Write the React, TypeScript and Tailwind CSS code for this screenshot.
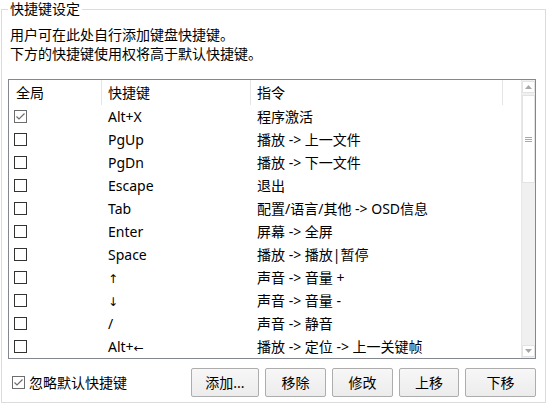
import React from 'react';

const rows = [
  { checked: true, key: 'Alt+X', cmd: '程序激活' },
  { checked: false, key: 'PgUp', cmd: '播放 -> 上一文件' },
  { checked: false, key: 'PgDn', cmd: '播放 -> 下一文件' },
  { checked: false, key: 'Escape', cmd: '退出' },
  { checked: false, key: 'Tab', cmd: '配置/语言/其他 -> OSD信息' },
  { checked: false, key: 'Enter', cmd: '屏幕 -> 全屏' },
  { checked: false, key: 'Space', cmd: '播放 -> 播放|暂停' },
  { checked: false, key: '↑', cmd: '声音 -> 音量 +' },
  { checked: false, key: '↓', cmd: '声音 -> 音量 -' },
  { checked: false, key: '/', cmd: '声音 -> 静音' },
  { checked: false, key: 'Alt+←', cmd: '播放 -> 定位 -> 上一关键帧' },
];

const buttons = [
  { label: '添加...', w: 'w-[68px]' },
  { label: '移除', w: 'w-[61px]' },
  { label: '修改', w: 'w-[61px]' },
  { label: '上移', w: 'w-[60px]' },
  { label: '下移', w: 'w-[71px]' },
];

function KeyLabel({ text }: { text: string }) {
  const parts = text.split(/([↑↓←])/);
  return (
    <>
      {parts.map((p, i) =>
        /[↑↓←]/.test(p) ? (
          <span key={i} className="text-[12px]" style={{ fontFamily: '"DejaVu Sans", sans-serif' }}>
            {p}
          </span>
        ) : (
          <span key={i}>{p}</span>
        )
      )}
    </>
  );
}

function CheckBox({ checked }: { checked: boolean }) {
  return (
    <svg width="13" height="13" viewBox="0 0 13 13" className="shrink-0">
      <rect x="0.5" y="0.5" width="12" height="12" fill="#fff" stroke={checked ? '#6d6d6d' : '#333'} />
      {checked && <polyline points="2.5,6.5 5,9 10.5,3.5" fill="none" stroke="#6d6d6d" strokeWidth="1.2" />}
    </svg>
  );
}

function ScrollBar() {
  return (
    <div className="w-[14px] flex flex-col bg-[#f0f0f0] border-l border-[#e8e8e8]">
      <div className="h-[12px] mt-[1px] bg-white border border-[#e3e3e3] flex items-center justify-center">
        <svg width="7" height="4" viewBox="0 0 7 4">
          <polygon points="0,4 3.5,0 7,4" fill="#a8a8a8" />
        </svg>
      </div>
      <div className="h-[88px] mt-[2px] bg-white border border-[#e3e3e3] flex flex-col items-center justify-center gap-[1px]">
        <div className="w-[7px] h-[1px] bg-[#a8a8a8]" />
        <div className="w-[7px] h-[1px] bg-[#a8a8a8]" />
        <div className="w-[7px] h-[1px] bg-[#a8a8a8]" />
      </div>
      <div className="flex-1" />
      <div className="h-[12px] mb-[1px] bg-white border border-[#e3e3e3] flex items-center justify-center">
        <svg width="7" height="4" viewBox="0 0 7 4">
          <polygon points="0,0 3.5,4 7,0" fill="#a8a8a8" />
        </svg>
      </div>
    </div>
  );
}

export default function App() {
  return (
    <div
      className="w-[546px] h-[406px] bg-white pt-[9px] pl-[1px] text-[14px] text-black"
      style={{ fontFamily: '"Noto Sans", "Noto Sans CJK SC", sans-serif' }}
    >
      <div className="relative w-[545px] h-[394px] border border-[#dcdcdc] flex flex-col pl-[6px] pt-[15px] pb-[5px]">
        <span className="absolute left-[6px] top-[-11px] px-[2px] bg-white leading-[19px]">快捷键设定</span>

        <div className="ml-[2px] leading-[19px]">
          <div>用户可在此处自行添加键盘快捷键。</div>
          <div>下方的快捷键使用权将高于默认快捷键。</div>
        </div>

        <div className="mt-[16px] w-[528px] h-[280px] border border-[#828790] flex">
          <div className="flex-1 flex flex-col">
            <div className="h-[25px] flex items-stretch">
              <div className="w-[93px] border-r border-[#e5e5e5] pl-[7px] flex items-center">全局</div>
              <div className="w-[149px] border-r border-[#e5e5e5] pl-[6px] flex items-center">快捷键</div>
              <div className="w-[252px] border-r border-[#e5e5e5] pl-[6px] flex items-center">指令</div>
            </div>
            {rows.map((r, i) => (
              <div key={i} className="h-[23px] flex items-center">
                <div className="w-[93px] pl-[5px] flex items-center">
                  <CheckBox checked={r.checked} />
                </div>
                <div className="w-[149px] pl-[6px]">
                  <KeyLabel text={r.key} />
                </div>
                <div className="pl-[6px] whitespace-nowrap">{r.cmd}</div>
              </div>
            ))}
          </div>
          <ScrollBar />
        </div>

        <div className="mt-[9px] w-[528px] flex items-center">
          <div className="ml-[4px] flex items-center gap-[4px]">
            <CheckBox checked />
            <span>忽略默认快捷键</span>
          </div>
          <div className="ml-auto flex gap-[6px]">
            {buttons.map((b) => (
              <button
                key={b.label}
                className={`${b.w} h-[29px] border border-[#adadad] rounded-[2px] bg-gradient-to-b from-[#f7f7f7] to-[#ececec] flex items-center justify-center`}
              >
                {b.label}
              </button>
            ))}
          </div>
        </div>
      </div>
    </div>
  );
}
